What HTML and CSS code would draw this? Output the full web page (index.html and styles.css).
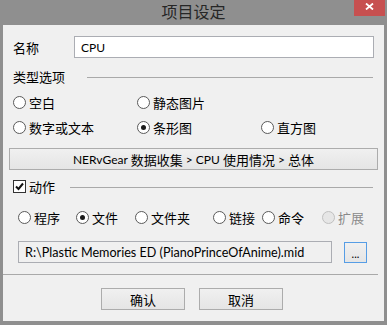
FILE: index.html
```html
<!DOCTYPE html>
<html lang="zh-CN">
    <head>
        <meta charset="UTF-8">
        <meta name="viewport" content="width=device-width, initial-scale=1.0">
        <title>项目设定</title>
        <link rel="stylesheet" href="styles.css">
    </head>
    <body>
        <div class="janela">
            <div class="barraTitulo">
                <span></span>
                <span class="titulo">项目设定</span>
                <span class="fechar">
                    <svg width="9" height="7" viewBox="0 0 9 7"><path d="M1 0.5 L8 6.5 M8 0.5 L1 6.5" stroke="#fff" stroke-width="1.8" fill="none"/></svg>
                </span>
            </div>
            <div class="cliente">
                <!--Nome do item-->
                <div class="linhaNome">
                    <label class="rotulo" for="idNome">名称</label>
                    <div class="caixa caixaNome" id="idNome"><span class="lat">CPU</span></div>
                </div>

                <!--Tipo-->
                <div class="grupo grupoTipo">
                    <span>类型选项</span>
                    <span class="traco"></span>
                </div>
                <div class="gradeTipo">
                    <div class="opcao"><span class="radio"></span>空白</div>
                    <div class="opcao"><span class="radio"></span>静态图片</div>
                    <div class="opcao"></div>
                    <div class="opcao"><span class="radio"></span>数字或文本</div>
                    <div class="opcao"><span class="radio marcado"></span>条形图</div>
                    <div class="opcao"><span class="radio"></span>直方图</div>
                </div>
                <div class="botao botaoFonte"><span class="lat">NERvGear&nbsp;</span>数据收集<span class="lat">&nbsp;&gt; CPU&nbsp;</span>使用情况<span class="lat">&nbsp;&gt;&nbsp;</span>总体</div>

                <!--Ação-->
                <div class="grupo grupoAcao">
                    <span class="check">
                        <svg width="11" height="11" viewBox="0 0 11 11"><path d="M2 5.5 L4.5 8 L9 2.5" stroke="#111" stroke-width="2" fill="none"/></svg>
                    </span>
                    <span>动作</span>
                    <span class="traco"></span>
                </div>
                <div class="gradeAcao">
                    <div class="opcao"><span class="radio"></span>程序</div>
                    <div class="opcao"><span class="radio marcado"></span>文件</div>
                    <div class="opcao"><span class="radio"></span>文件夹</div>
                    <div class="opcao"><span class="radio"></span>链接</div>
                    <div class="opcao"><span class="radio"></span>命令</div>
                    <div class="opcao desativado"><span class="radio"></span>扩展</div>
                </div>
                <div class="linhaArquivo">
                    <div class="caixa caixaArquivo"><span class="caminho">R:\Plastic Memories ED (PianoPrinceOfAnime).mid</span></div>
                    <div class="botao botaoProcurar">...</div>
                </div>

                <div class="separador"></div>

                <div class="linhaBotoes">
                    <div class="botao botaoFinal">确认</div>
                    <div class="botao botaoFinal">取消</div>
                </div>
            </div>
        </div>
    </body>
</html>
```

FILE: styles.css
```css
/*Reset*/
html,
body {
margin: 0;
padding: 0;
}

html {
box-sizing: border-box;
}

*, *::before, *::after {
box-sizing: inherit;
}

/*Janela*/

body{
    width: 387px;
    height: 325px;
    overflow: hidden;
    font-family: Lato, "Noto Sans CJK SC", sans-serif;
    font-size: 13px;
    color: #000;
}

.lat{
    font-size: 12px;
}

.caminho{
    font-size: 12.6px;
}

.janela{
    width: 387px;
    height: 325px;
    background-color: #8f8f8f;
    display: flex;
    flex-direction: column;
}

.barraTitulo{
    height: 25px;
    display: grid;
    grid-template-columns: 1fr auto 1fr;
}

.titulo{
    font-family: "Noto Sans CJK SC", sans-serif;
    font-size: 16px;
    line-height: 22px;
    color: #262626;
}

.fechar{
    justify-self: end;
    width: 31px;
    height: 16px;
    margin-right: 2px;
    background-color: #c75050;
    display: flex;
    justify-content: center;
    align-items: center;
    padding-bottom: 3px;
}

.cliente{
    margin: 0 3px;
    height: 296px;
    background-color: #f0f0f0;
    display: flex;
    flex-direction: column;
}

/*Campos*/

.linhaNome{
    margin-top: 11px;
    height: 22px;
    display: flex;
    align-items: center;
    padding-left: 10px;
}

.rotulo{
    width: 61px;
}

.caixa{
    height: 22px;
    border: 1px solid #abadb3;
    display: flex;
    align-items: center;
    padding-left: 6px;
    white-space: nowrap;
}

.caixaNome{
    width: 300px;
    background-color: #fff;
}

.grupo{
    height: 16px;
    display: flex;
    align-items: center;
}

.grupoTipo{
    margin-top: 10px;
    padding-left: 10px;
    padding-right: 11px;
}

.grupoTipo .traco{
    margin-left: 22px;
}

.traco{
    flex: 1;
    height: 1px;
    background-color: #a9a9a9;
    margin-top: 2px;
}

.grupoAcao{
    margin-top: 8px;
    padding-left: 10px;
    padding-right: 11px;
}

.grupoAcao .traco{
    margin-left: 15px;
}

.check{
    width: 13px;
    height: 13px;
    border: 1px solid #333;
    background-color: #fff;
    margin-right: 3px;
    display: flex;
    justify-content: center;
    align-items: center;
}

/*Opções*/

.opcao{
    height: 20px;
    display: flex;
    align-items: center;
    white-space: nowrap;
}

.radio{
    width: 13px;
    height: 13px;
    border: 1px solid #5a5a5a;
    border-radius: 50%;
    background-color: #fff;
    margin-right: 3px;
    display: flex;
    justify-content: center;
    align-items: center;
}

.marcado::after{
    content: "";
    width: 5px;
    height: 5px;
    border-radius: 50%;
    background-color: #1a1a1a;
}

.desativado{
    color: #8a8a8a;
}

.desativado .radio{
    border-color: #c0c0c0;
    background-color: #e6e6e6;
}

.gradeTipo{
    margin-top: 8px;
    padding-left: 10px;
    display: grid;
    grid-template-columns: 124px 124px 124px;
    row-gap: 5px;
}

.gradeAcao{
    margin-top: 13px;
    padding-left: 15px;
    display: grid;
    grid-template-columns: 58px 59px 78px 49px 60px auto;
}

/*Botões*/

.botao{
    border: 1px solid #acacac;
    background: linear-gradient(#f0f0f0, #e5e5e5);
    display: flex;
    justify-content: center;
    align-items: center;
    white-space: nowrap;
}

.botaoFonte{
    margin: 11px 6px 0 6px;
    height: 22px;
}

.linhaArquivo{
    margin-top: 14px;
    padding-left: 15px;
    display: flex;
    align-items: center;
    gap: 12px;
}

.caixaArquivo{
    width: 314px;
}

.botaoProcurar{
    width: 23px;
    height: 21px;
    border-color: #569de5;
    font-size: 11px;
    padding-top: 3px;
}

.separador{
    margin-top: 11px;
    margin-right: 6px;
    height: 1px;
    background-color: #a9a9a9;
}

.linhaBotoes{
    margin-top: 13px;
    padding-left: 98px;
    display: flex;
    gap: 14px;
}

.botaoFinal{
    width: 84px;
    height: 22px;
}
```
